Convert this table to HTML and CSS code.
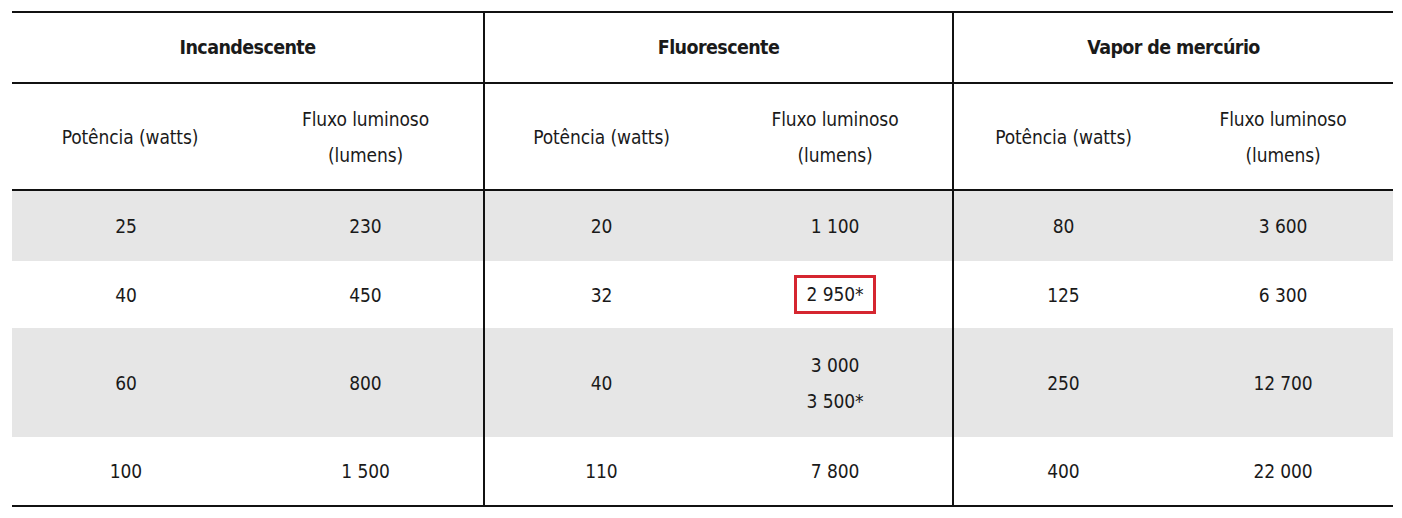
FILE: index.html
```html
<!DOCTYPE html>
<html lang="pt">
<head>
<meta charset="utf-8">
<title>Lâmpadas</title>
<link rel="stylesheet" href="styles.css">
</head>
<body>
<table class="lamps">
  <colgroup>
    <col class="c1"><col class="c2"><col class="c3"><col class="c4"><col class="c5"><col class="c6">
  </colgroup>
  <thead>
    <tr class="r-head">
      <th colspan="2">Incandescente</th>
      <th colspan="2" class="sep">Fluorescente</th>
      <th colspan="2" class="sep">Vapor de mercúrio</th>
    </tr>
    <tr class="r-sub">
      <td>Potência (watts)</td>
      <td>Fluxo luminoso<br>(lumens)</td>
      <td class="sep">Potência (watts)</td>
      <td>Fluxo luminoso<br>(lumens)</td>
      <td class="sep">Potência (watts)</td>
      <td>Fluxo luminoso<br>(lumens)</td>
    </tr>
  </thead>
  <tbody>
    <tr class="r1 gray">
      <td class="n1">25</td><td>230</td>
      <td class="sep">20</td><td>1 100</td>
      <td class="sep">80</td><td>3 600</td>
    </tr>
    <tr class="r2">
      <td class="n1">40</td><td>450</td>
      <td class="sep">32</td><td><span class="mark">2 950*</span></td>
      <td class="sep">125</td><td>6 300</td>
    </tr>
    <tr class="r3 gray">
      <td class="n1">60</td><td>800</td>
      <td class="sep">40</td><td>3 000<br>3 500*</td>
      <td class="sep">250</td><td>12 700</td>
    </tr>
    <tr class="r4">
      <td class="n1">100</td><td>1 500</td>
      <td class="sep">110</td><td>7 800</td>
      <td class="sep">400</td><td>22 000</td>
    </tr>
  </tbody>
</table>
</body>
</html>
```

FILE: styles.css
```css
html, body {
  margin: 0;
  padding: 0;
  background: #ffffff;
}

body {
  font-family: "DejaVu Sans Condensed", "Liberation Sans", sans-serif;
  color: #1a1a1a;
}

.lamps {
  margin: 11px 0 0 12px;
  width: 1381px;
  table-layout: fixed;
  border-collapse: separate;
  border-spacing: 0;
  border-top: 2px solid #111111;
  border-bottom: 2px solid #111111;
}

.c1 { width: 236px; }
.c2 { width: 235px; }
.c3 { width: 235px; }
.c4 { width: 234px; }
.c5 { width: 221px; }
.c6 { width: 220px; }

.lamps th,
.lamps td {
  padding: 0;
  text-align: center;
  vertical-align: middle;
  font-size: 19px;
  line-height: 36px;
  letter-spacing: -0.1px;
  font-weight: normal;
}

.lamps .sep {
  border-left: 2px solid #111111;
}

.r-head th {
  font-weight: bold;
  font-size: 19.5px;
  letter-spacing: -0.6px;
  border-bottom: 2px solid #111111;
}

.r-head { height: 71px; }

.r-sub td {
  border-bottom: 2px solid #111111;
}

.r-sub { height: 107px; }

.r1 { height: 70px; }
.r2 { height: 67px; }
.r3 { height: 109px; }
.r4 { height: 68px; }

.gray td {
  background: #e6e6e6;
}

.n1 {
  text-indent: -8px;
}

.mark {
  display: inline-block;
  border: 3px solid #d52630;
  padding: 0 10px 0 10px;
  line-height: 33px;
}
```
